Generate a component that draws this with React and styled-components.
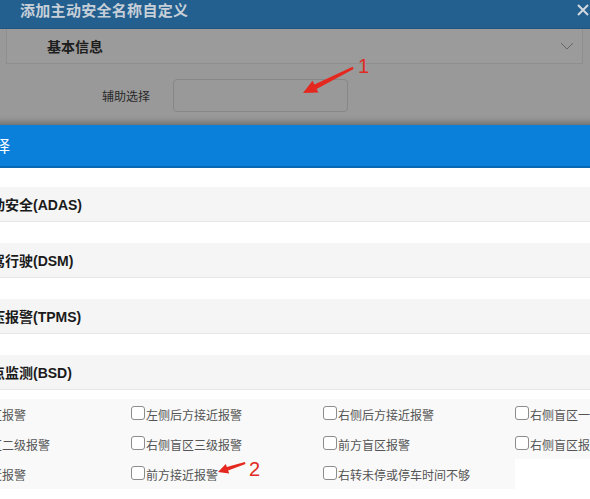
import React from 'react';
import styled, { createGlobalStyle } from 'styled-components';

const GlobalStyle = createGlobalStyle`
   html, body {
      margin: 0;
      padding: 0;
      overflow: hidden;
      background: #999999;
   }
`;

const cjk = `"Liberation Sans", "Noto Sans CJK SC", sans-serif`;

const Screen = styled.div`
   position: relative;
   width: 590px;
   height: 499px;
   overflow: hidden;
   background: #999999;
   font-family: ${cjk};
`;

/* dialog behind the mask */
const BackDialog = styled.div`
   height: 125px;
   display: flex;
   flex-direction: column;
`;

const BackHeader = styled.div`
   height: 29px;
   flex: none;
   display: flex;
   align-items: flex-start;
   justify-content: space-between;
   padding: 2px 0 0 20px;
   box-sizing: border-box;
   background: #24608f;
   border-bottom: 1px solid #1f557f;
`;

const BackTitle = styled.span`
   font-size: 15px;
   line-height: 18px;
   font-weight: bold;
   color: #c6cfd8;
   letter-spacing: 0.3px;
`;

const CloseIcon = styled.svg`
   width: 12px;
   height: 12px;
   margin: 2px 1px 0 0;
`;

const SectionBar = styled.div`
   height: 35px;
   margin: 0 7px 0 6px;
   box-sizing: border-box;
   display: flex;
   align-items: center;
   justify-content: space-between;
   padding: 0 8px 0 40px;
   background: #9c9b9b;
   border: 1px solid #8f8e8e;
   border-top: none;
`;

const SectionTitle = styled.span`
   font-size: 14px;
   font-weight: bold;
   color: #1e1e1e;
`;

const FormRow = styled.div`
   display: flex;
   align-items: center;
   margin-top: 15px;
   padding-left: 102px;
   gap: 23px;
`;

const Label = styled.span`
   width: 48px;
   font-size: 12px;
   color: #2a2a2a;
   text-align: right;
`;

const Field = styled.div`
   width: 175px;
   height: 33px;
   box-sizing: border-box;
   border: 1px solid #888787;
   border-radius: 4px;
`;

/* dialog in front */
const FrontDialog = styled.div`
   position: relative;
   margin-left: -80px;
   width: 760px;
   height: 374px;
   background: #ffffff;
   box-shadow: 0 -3px 6px rgba(0, 0, 0, 0.28);
`;

const FrontHeader = styled.div`
   height: 43px;
   box-sizing: border-box;
   display: flex;
   align-items: center;
   padding: 0 0 1px 26px;
   background: #0b80da;
   border-bottom: 2px solid #0868b4;
`;

const FrontTitle = styled.span`
   font-size: 16px;
   color: #ffffff;
`;

const Groups = styled.div`
   display: flex;
   flex-direction: column;
   gap: 21px;
   padding-top: 19px;
`;

const GroupBar = styled.div`
   height: 35px;
   box-sizing: border-box;
   display: flex;
   align-items: center;
   padding-left: 57px;
   background: #f5f5f5;
   border-bottom: 1px solid #e6e6e6;
   font-size: 14px;
   font-weight: bold;
   color: #1a1a1a;
`;

const OptionGrid = styled.div`
   display: grid;
   grid-template-columns: repeat(4, 192px);
   grid-auto-rows: 30px;
   margin: -12px 0 0 19px;
`;

const Option = styled.label`
   display: flex;
   align-items: center;
   gap: 1px;
   background: ${p => (p.$empty ? '#ffffff' : '#f9f9f9')};
   font-size: 12px;
   color: #555555;
   white-space: nowrap;
`;

const Box = styled.span`
   width: 14px;
   height: 14px;
   flex: none;
   box-sizing: border-box;
   border: 1px solid #8c8c8c;
   border-radius: 3px;
   background: #ffffff;
   margin-top: -3px;
`;

const Marks = styled.svg`
   position: absolute;
   left: 0;
   top: 0;
   pointer-events: none;
`;

const Number = styled.span`
   position: absolute;
   left: ${p => p.$x}px;
   top: ${p => p.$y}px;
   font-family: "Liberation Sans", sans-serif;
   font-size: 20px;
   line-height: 20px;
   color: #e12a21;
`;

const groups = ['主动安全(ADAS)', '规驾行驶(DSM)', '胎压报警(TPMS)', '盲点监测(BSD)'];

const options = [
   '左侧盲区报警', '左侧后方接近报警', '右侧后方接近报警', '右侧盲区一级报警',
   '左侧盲区二级报警', '右侧盲区三级报警', '前方盲区报警', '右侧盲区报警',
   '后方接近报警', '前方接近报警', '右转未停或停车时间不够', null
];

const App = () => (
   <>
      <GlobalStyle />
      <Screen>
         <BackDialog>
            <BackHeader>
               <BackTitle>添加主动安全名称自定义</BackTitle>
               <CloseIcon viewBox='0 0 12 12'>
                  <path d='M1 1 L11 11 M11 1 L1 11' stroke='#d3d9df' strokeWidth='2' />
               </CloseIcon>
            </BackHeader>
            <SectionBar>
               <SectionTitle>基本信息</SectionTitle>
               <svg width='14' height='8' viewBox='0 0 14 8'>
                  <path d='M1 1 L7 7 L13 1' fill='none' stroke='#666' strokeWidth='1' />
               </svg>
            </SectionBar>
            <FormRow>
               <Label>辅助选择</Label>
               <Field />
            </FormRow>
         </BackDialog>

         <FrontDialog>
            <FrontHeader>
               <FrontTitle>辅助选择</FrontTitle>
            </FrontHeader>
            <Groups>
               {groups.map(g => (
                  <GroupBar key={g}>{g}</GroupBar>
               ))}
               <OptionGrid>
                  {options.map((o, i) =>
                     o ? (
                        <Option key={i}>
                           <Box />
                           {o}
                        </Option>
                     ) : (
                        <Option key={i} $empty />
                     )
                  )}
               </OptionGrid>
            </Groups>
         </FrontDialog>

         <Marks width='590' height='499'>
            <polygon
               fill='#e5281f'
               points='303,93 318.5,92.5 316.6,88.9 353.6,69 352.6,66.8 314.4,84.5 312.5,80.8'
            />
            <polygon
               fill='#e5281f'
               points='218,472 229.2,473.5 228.1,470.5 245.5,464 244.8,462 226.9,467.1 225.8,464'
            />
         </Marks>
         <Number $x={358} $y={56}>1</Number>
         <Number $x={249} $y={459}>2</Number>
      </Screen>
   </>
);

export default App;
